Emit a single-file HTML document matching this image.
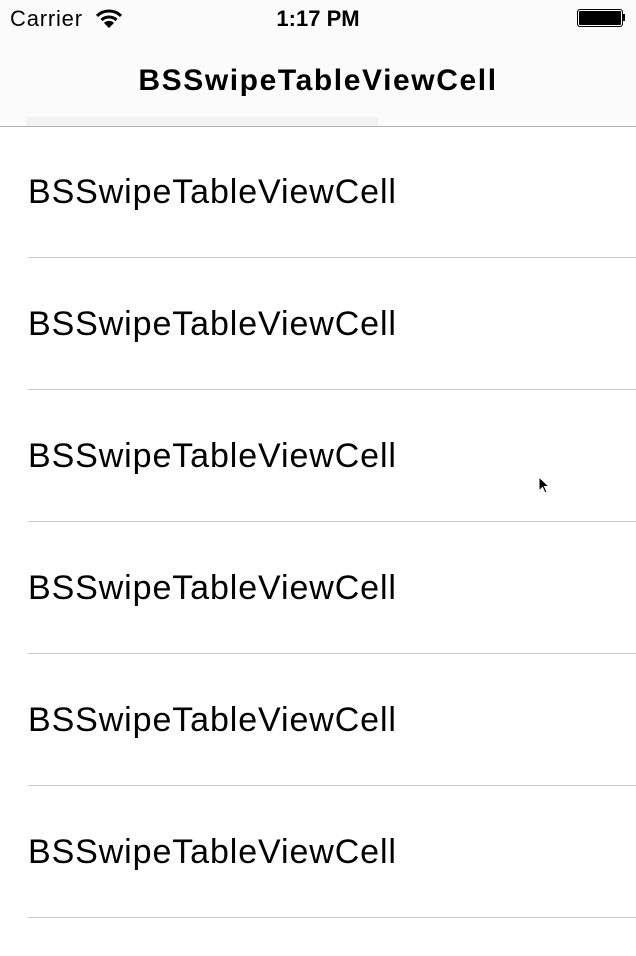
<!DOCTYPE html>
<html><head><style>
body{margin:0;width:636px;height:956px;background:#fff;font-family:"Liberation Sans",sans-serif;position:relative;overflow:hidden}
.nav{position:absolute;left:0;top:0;width:636px;height:126px;background:#fbfbfb;border-bottom:1px solid #b2b2b2}
.t{position:absolute;white-space:nowrap}
.row{position:absolute;left:28px;right:0;height:131px;border-bottom:1px solid #c8c7cc}
.row span{position:absolute;left:0;top:47px;font-size:34px;color:#000;letter-spacing:0.9px}
</style></head><body>
<div class="nav">
<div class="t" style="left:10px;top:6px;font-size:22px;letter-spacing:0.8px">Carrier</div>
<svg style="position:absolute;left:96px;top:9px" width="26" height="20" viewBox="0 0 26 20"><path d="M1 7 A17 17 0 0 1 25 7" stroke="#000" stroke-width="3" fill="none"/><path d="M5.5 11 A11 11 0 0 1 20.5 11" stroke="#000" stroke-width="3" fill="none"/><path d="M8 14 L13 19 L18 14 A7 7 0 0 0 8 14Z" fill="#000"/></svg>
<div class="t" style="left:0;width:636px;text-align:center;top:6px;font-size:22px;font-weight:bold">1:17 PM</div>
<div style="position:absolute;left:577px;top:9px;width:44px;height:16px;border:1px solid #000;border-radius:3px;background:#000;box-shadow:inset 0 0 0 1px #fff"></div>
<div style="position:absolute;left:623px;top:14px;width:2px;height:7px;background:#000"></div>
<div class="t" style="left:0;width:636px;text-align:center;top:64px;font-size:30px;font-weight:bold;letter-spacing:1.6px">BSSwipeTableViewCell</div>
<div style="position:absolute;left:26px;top:117px;width:352px;height:9px;background:#f3f3f3"></div>
</div>
<div class="row" style="top:126px"><span>BSSwipeTableViewCell</span></div>
<div class="row" style="top:258px"><span>BSSwipeTableViewCell</span></div>
<div class="row" style="top:390px"><span>BSSwipeTableViewCell</span></div>
<div class="row" style="top:522px"><span>BSSwipeTableViewCell</span></div>
<div class="row" style="top:654px"><span>BSSwipeTableViewCell</span></div>
<div class="row" style="top:786px"><span>BSSwipeTableViewCell</span></div>
<svg style="position:absolute;left:538px;top:476px" width="14" height="20" viewBox="0 0 14 20"><path d="M1 1 L1 15 L4.5 11.5 L7 17 L9 16 L6.5 10.5 L11 10.5 Z" fill="#000" stroke="#fff" stroke-width="1"/></svg>
</body></html>
